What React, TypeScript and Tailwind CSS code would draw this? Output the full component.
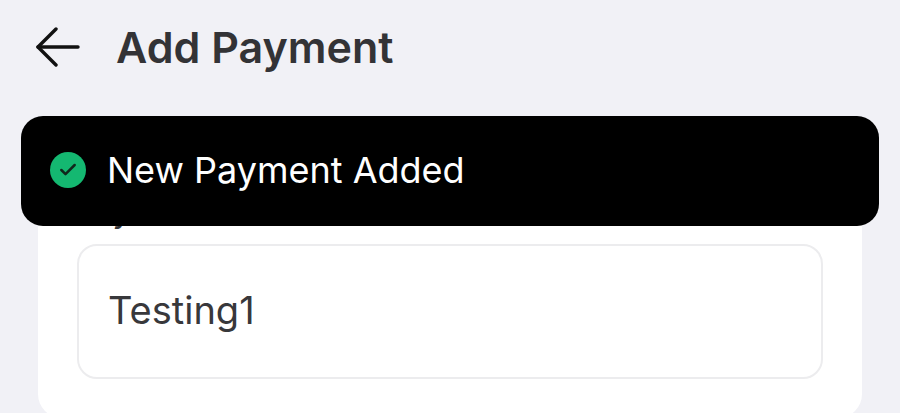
import React from 'react';
import { Check } from 'lucide-react';

const ArrowLeft: React.FC = () => (
  <svg viewBox="0 0 44 40" fill="none" stroke="#111111" strokeWidth="3.4" strokeLinecap="round" strokeLinejoin="round" className="h-10 w-11 shrink-0">
    <path d="M2 20H42" />
    <path d="M20 2L2 20L20 38" />
  </svg>
);

export default function App() {
  return (
    <div className="relative h-[413px] w-[900px] overflow-hidden bg-[#f1f1f6] font-['Inter',sans-serif]">
      <header className="flex h-[94px] items-center pl-[36px]">
        <ArrowLeft />
        <h1 className="ml-[36px] text-[43px] leading-none font-semibold text-[#333336]">Add Payment</h1>
      </header>

      <div className="mx-[38px] mt-[92px] h-[232px] rounded-[24px] bg-white px-[39px] pt-[8px]">
        <label className="block text-[30px] leading-[36px] font-medium text-[#333336]">Payment Name</label>
        <div className="mt-[14px] flex h-[135px] items-center rounded-[20px] border-2 border-[#ececee] pb-[3px] pl-[29px] text-[38px] text-[#38383b]">
          Testing1
        </div>
      </div>

      <div className="absolute top-[116px] left-[21px] flex h-[110px] w-[858px] items-center gap-[21px] rounded-[22px] bg-black pb-[2px] pl-[29px]">
        <span className="flex h-[36px] w-[36px] items-center justify-center rounded-full bg-[#14b871]">
          <Check className="h-[20px] w-[20px] text-[#10281c]" strokeWidth={3} />
        </span>
        <span className="text-[36px] leading-none text-white">New Payment Added</span>
      </div>
    </div>
  );
}
